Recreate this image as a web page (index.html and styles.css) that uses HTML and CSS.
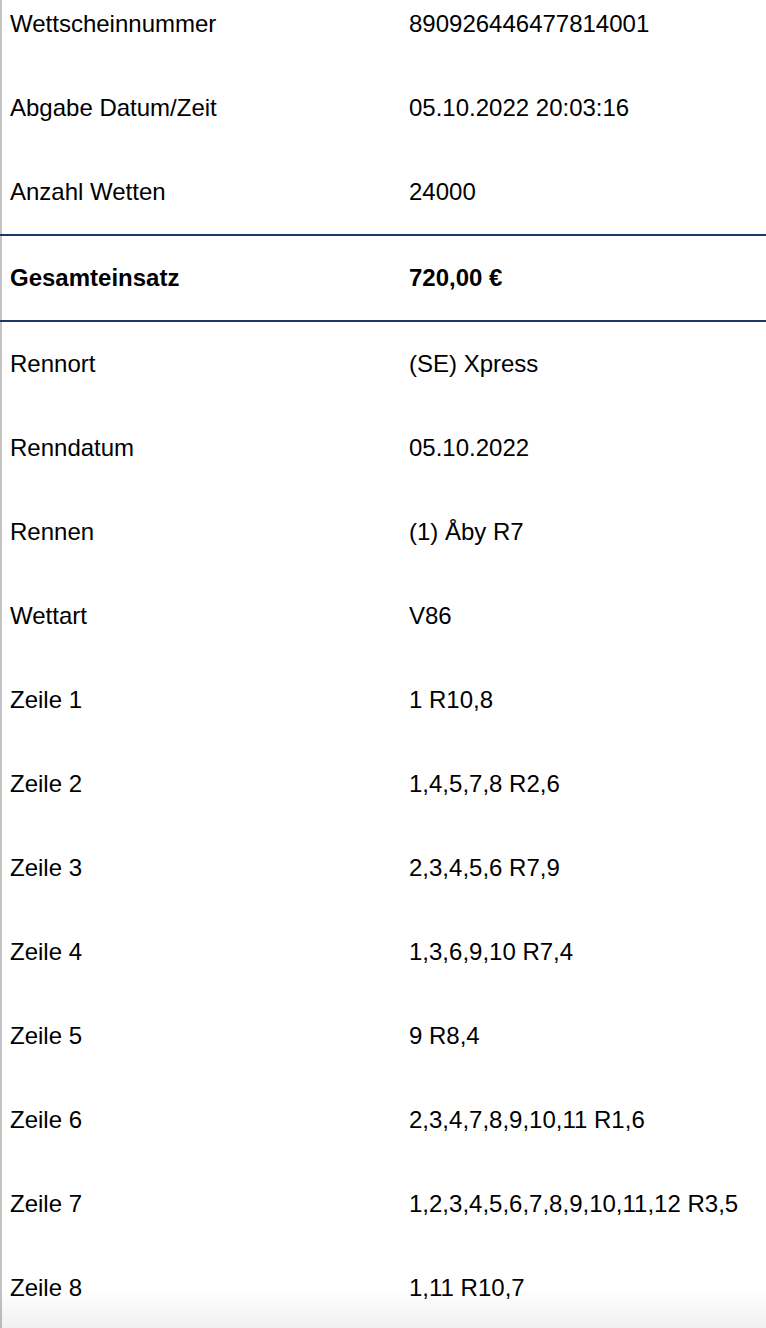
FILE: index.html
```html
<!DOCTYPE html>
<html lang="de">
<head>
<meta charset="utf-8">
<title>Wettschein</title>
<link rel="stylesheet" href="styles.css">
</head>
<body>
<div class="sheet">
  <div class="row"><div class="label">Wettscheinnummer</div><div class="value">890926446477814001</div></div>
  <div class="row"><div class="label">Abgabe Datum/Zeit</div><div class="value">05.10.2022 20:03:16</div></div>
  <div class="row"><div class="label">Anzahl Wetten</div><div class="value">24000</div></div>
  <div class="total">
    <div class="row strong"><div class="label">Gesamteinsatz</div><div class="value">720,00 €</div></div>
  </div>
  <div class="row"><div class="label">Rennort</div><div class="value">(SE) Xpress</div></div>
  <div class="row"><div class="label">Renndatum</div><div class="value">05.10.2022</div></div>
  <div class="row"><div class="label">Rennen</div><div class="value">(1) Åby R7</div></div>
  <div class="row"><div class="label">Wettart</div><div class="value">V86</div></div>
  <div class="row"><div class="label">Zeile 1</div><div class="value">1 R10,8</div></div>
  <div class="row"><div class="label">Zeile 2</div><div class="value">1,4,5,7,8 R2,6</div></div>
  <div class="row"><div class="label">Zeile 3</div><div class="value">2,3,4,5,6 R7,9</div></div>
  <div class="row"><div class="label">Zeile 4</div><div class="value">1,3,6,9,10 R7,4</div></div>
  <div class="row"><div class="label">Zeile 5</div><div class="value">9 R8,4</div></div>
  <div class="row"><div class="label">Zeile 6</div><div class="value">2,3,4,7,8,9,10,11 R1,6</div></div>
  <div class="row"><div class="label">Zeile 7</div><div class="value">1,2,3,4,5,6,7,8,9,10,11,12 R3,5</div></div>
  <div class="row"><div class="label">Zeile 8</div><div class="value">1,11 R10,7</div></div>
</div>
<div class="fade"></div>
</body>
</html>
```
FILE: styles.css
```css
html, body {
  margin: 0;
  padding: 0;
  background: #ffffff;
}
body {
  font-family: "Liberation Sans", Arial, Helvetica, sans-serif;
  font-size: 24px;
  color: #000000;
  overflow: hidden;
  height: 1328px;
}
.sheet {
  margin-top: -18px;
  display: flex;
  flex-direction: column;
}
.row {
  display: grid;
  grid-template-columns: 399px 1fr;
  align-items: center;
  height: 84px;
  box-sizing: border-box;
  border-left: 2px solid #c3c3c3;
  padding-left: 8px;
}
.total {
  border-top: 2px solid #1d3766;
  border-bottom: 2px solid #1d3766;
}
.strong {
  font-weight: bold;
}
.label, .value {
  white-space: nowrap;
}
.fade {
  position: fixed;
  left: 0;
  right: 0;
  bottom: 0;
  height: 40px;
  background: linear-gradient(to bottom, rgba(0,0,0,0), rgba(0,0,0,0.055));
  pointer-events: none;
}
```
